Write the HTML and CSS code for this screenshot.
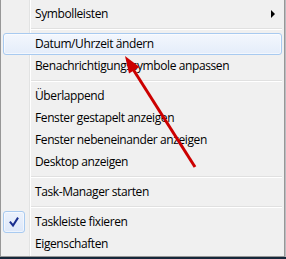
FILE: index.html
```html
<!DOCTYPE html>
<html lang="de">
<head>
<meta charset="utf-8">
<title>Kontextmenü</title>
<link rel="stylesheet" href="styles.css">
</head>
<body>
<div class="screen">
  <div class="menu">
    <div class="item"><span class="slot"></span><span class="label">Symbolleisten</span><span class="sub"></span></div>
    <div class="sep"></div>
    <div class="item hot"><span class="slot"></span><span class="label">Datum/Uhrzeit ändern</span></div>
    <div class="item"><span class="slot"></span><span class="label">Benachrichtigungssymbole anpassen</span></div>
    <div class="sep"></div>
    <div class="item"><span class="slot"></span><span class="label">Überlappend</span></div>
    <div class="item"><span class="slot"></span><span class="label">Fenster gestapelt anzeigen</span></div>
    <div class="item"><span class="slot"></span><span class="label">Fenster nebeneinander anzeigen</span></div>
    <div class="item"><span class="slot"></span><span class="label">Desktop anzeigen</span></div>
    <div class="sep"></div>
    <div class="item"><span class="slot"></span><span class="label">Task-Manager starten</span></div>
    <div class="sep"></div>
    <div class="item"><span class="slot checked"><svg width="20" height="20" viewBox="0 0 20 20"><path d="M6.5 10.5 L9 13.5 L13.5 6.5" fill="none" stroke="#1a2f8f" stroke-width="2" stroke-linecap="square"/></svg></span><span class="label">Taskleiste fixieren</span></div>
    <div class="item"><span class="slot"></span><span class="label">Eigenschaften</span></div>
  </div>
  <div class="taskbar"></div>
  <svg class="annotation" width="286" height="259" viewBox="0 0 286 259">
    <line x1="195" y1="167" x2="131" y2="66" stroke="#cc0000" stroke-width="3"/>
    <polygon points="125,56 139.5,67 129,73.5" fill="#cc0000"/>
  </svg>
</div>
</body>
</html>
```
FILE: styles.css
```css
html, body {
  margin: 0;
  padding: 0;
}
body {
  width: 286px;
  height: 259px;
  overflow: hidden;
  background: #16273a;
  font-family: "Segoe UI", "Open Sans", "Noto Sans", sans-serif;
  font-size: 12px;
  color: #000;
}
.screen {
  position: relative;
  width: 286px;
  height: 259px;
  display: flex;
  flex-direction: column;
}
.menu {
  width: 285px;
  box-sizing: border-box;
  border: 1px solid #979797;
  border-top: 0;
  padding: 3px 0 1px;
  background: linear-gradient(to right, #f0f0f0 0 28px, #e2e3e3 28px 29px, #ffffff 29px 30px, #f0f0f0 30px);
  box-shadow: 1px 0 0 #b9bcc0;
}
.item {
  height: 22px;
  box-sizing: border-box;
  margin: 0 2px;
  border: 1px solid transparent;
  border-radius: 3px;
  display: flex;
  align-items: center;
}
.item.hot {
  border-color: #a8caf0;
  background: linear-gradient(#f3f7fd, #e4edfa);
  box-shadow: inset 0 0 0 1px rgba(255, 255, 255, 0.55);
}
.slot {
  width: 22px;
  height: 22px;
  margin: -1px 0 -1px -1px;
  box-sizing: border-box;
  flex: none;
  display: flex;
  align-items: center;
  justify-content: center;
  border-radius: 3px;
}
.slot.checked {
  border: 1px solid #a8caf0;
  background: linear-gradient(#ecf2fc, #dde8f9);
  box-shadow: inset 0 0 0 1px rgba(255, 255, 255, 0.5);
}
.label {
  flex: 1;
  margin-left: 10px;
  letter-spacing: -0.4px;
  white-space: nowrap;
  line-height: 16px;
}
.sub {
  width: 0;
  height: 0;
  border-left: 4px solid #000;
  border-top: 4px solid transparent;
  border-bottom: 4px solid transparent;
  margin-right: 6px;
}
.sep {
  height: 8px;
  margin: 0 2px 0 30px;
  background: linear-gradient(transparent 3px, #e0e0e0 3px 4px, #ffffff 4px 5px, transparent 5px);
}
.taskbar {
  flex: 1;
}
.annotation {
  position: absolute;
  left: 0;
  top: 0;
  pointer-events: none;
}
```
